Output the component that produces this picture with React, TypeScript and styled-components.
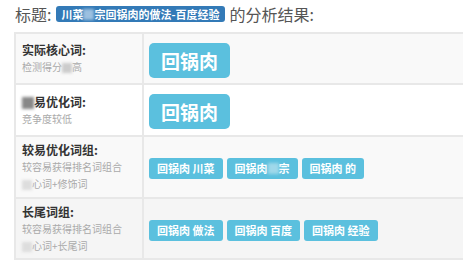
import React from 'react';
import styled, { createGlobalStyle } from 'styled-components';

const GlobalStyle = createGlobalStyle`
  html, body {
    margin: 0;
    padding: 0;
    background: #fff;
    overflow: hidden;
  }
  body {
    font-family: "Noto Sans CJK SC", "Noto Sans", sans-serif;
    color: #333;
  }
`;

const Page = styled.div`
  padding: 0 0 0 14px;
  overflow: hidden;
`;

const Heading = styled.div`
  height: 28px;
  display: flex;
  align-items: center;
  font-size: 16px;
  color: #555;
  white-space: nowrap;
  padding-left: 1px;
`;

const TitleBadge = styled.span`
  display: inline-flex;
  align-items: center;
  height: 16px;
  margin: 0 5px 0 5px;
  padding: 0 5px;
  border-radius: 3px;
  background: #337ab7;
  color: #fff;
  font-size: 11px;
  font-weight: bold;
  line-height: 1;
`;

const Hidden = styled.span<{ $tint: string }>`
  display: inline-block;
  width: 1em;
  height: 1em;
  vertical-align: middle;
  background: ${(p) => p.$tint};
  filter: blur(1.5px);
`;

const Table = styled.div`
  margin-top: 4px;
  width: 470px;
  display: grid;
  grid-template-columns: 128px 1fr;
  border-top: 2px solid #e8e8e8;
  border-left: 2px solid #e8e8e8;
`;

const Cell = styled.div<{ $bg: string; $h: number }>`
  box-sizing: border-box;
  height: ${(p) => p.$h}px;
  background: ${(p) => p.$bg};
  border-right: 2px solid #e8e8e8;
  border-bottom: 2px solid #e8e8e8;
  display: flex;
  align-items: center;
`;

const HeadCell = styled(Cell)`
  padding-left: 6px;
`;

const TagCell = styled(Cell)`
  padding: 3px 0 0 5px;
  gap: 4px;
`;

const Info = styled.div`
  display: flex;
  flex-direction: column;
`;

const Name = styled.div`
  font-size: 12px;
  font-weight: bold;
  line-height: 16px;
  color: #333;
`;

const Note = styled.div`
  font-size: 10px;
  line-height: 17px;
  color: #aaa;
`;

const Tag = styled.span<{ $big?: boolean }>`
  display: inline-flex;
  align-items: center;
  justify-content: center;
  box-sizing: border-box;
  height: ${(p) => (p.$big ? 35 : 21)}px;
  padding: 0 ${(p) => (p.$big ? 12 : 8)}px;
  border-radius: ${(p) => (p.$big ? 5 : 3)}px;
  background: #5bc0de;
  color: #fff;
  font-size: ${(p) => (p.$big ? 19 : 11)}px;
  font-weight: bold;
  line-height: 1;
  white-space: nowrap;
`;

type Row = {
  name: React.ReactNode;
  notes: React.ReactNode[];
  tags: React.ReactNode[];
  big?: boolean;
  bg: string;
  h: number;
};

const rows: Row[] = [
  {
    name: '实际核心词:',
    notes: [<>检测得分<Hidden $tint="#ccc" />高</>],
    tags: ['回锅肉'],
    big: true,
    bg: '#f9f9f9',
    h: 51,
  },
  {
    name: <><Hidden $tint="#888" />易优化词:</>,
    notes: ['竞争度较低'],
    tags: ['回锅肉'],
    big: true,
    bg: '#fff',
    h: 52,
  },
  {
    name: '较易优化词组:',
    notes: ['较容易获得排名词组合', <><Hidden $tint="#ddd" />心词+修饰词</>],
    tags: ['回锅肉 川菜', <>回锅肉 <Hidden $tint="#9fd8ea" />宗</>, '回锅肉 的'],
    bg: '#f9f9f9',
    h: 62,
  },
  {
    name: '长尾词组:',
    notes: ['较容易获得排名词组合', <><Hidden $tint="#ddd" />心词+长尾词</>],
    tags: ['回锅肉 做法', '回锅肉 百度', '回锅肉 经验'],
    bg: '#f5f5f5',
    h: 61,
  },
];

function App() {
  return (
    <Page>
      <GlobalStyle />
      <Heading>
        标题:
        <TitleBadge>
          川菜<Hidden $tint="#9cc0e0" />宗回锅肉的做法-百度经验
        </TitleBadge>
        的分析结果:
      </Heading>
      <Table>
        {rows.map((row, i) => (
          <React.Fragment key={i}>
            <HeadCell $bg={row.bg} $h={row.h}>
              <Info>
                <Name>{row.name}</Name>
                {row.notes.map((n, j) => (
                  <Note key={j}>{n}</Note>
                ))}
              </Info>
            </HeadCell>
            <TagCell $bg={row.bg} $h={row.h}>
              {row.tags.map((t, j) => (
                <Tag key={j} $big={row.big}>{t}</Tag>
              ))}
            </TagCell>
          </React.Fragment>
        ))}
      </Table>
    </Page>
  );
}

export default App;
